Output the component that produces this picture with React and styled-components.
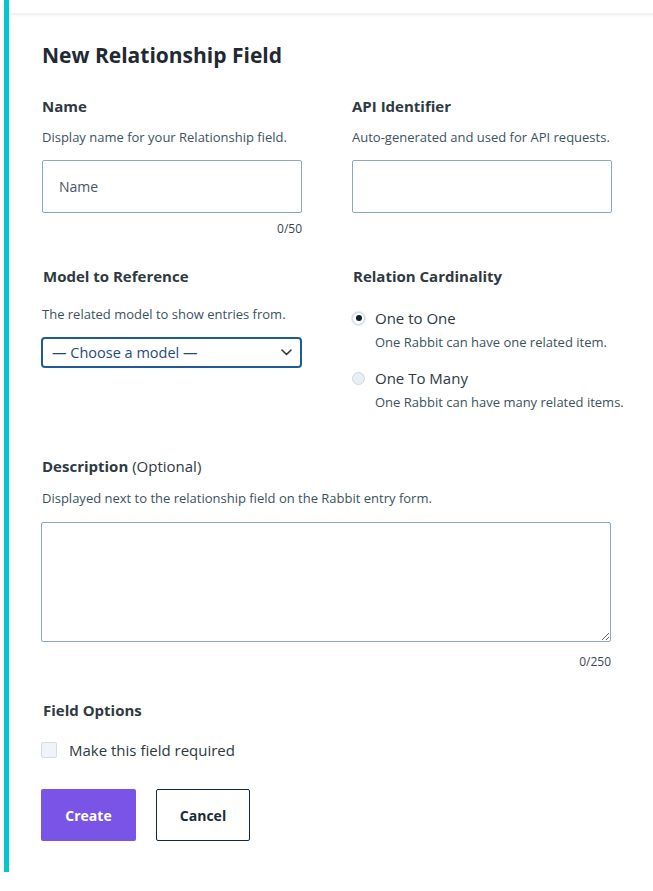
import styled, { createGlobalStyle } from "styled-components";

const GlobalStyle = createGlobalStyle`
  body {
    margin: 0;
    background: #ffffff;
    font-family: "Open Sans", "Noto Sans", sans-serif;
    overflow: hidden;
  }
`

const Card = styled.div`
  margin-left: 4px;
  width: 700px;
  height: 872px;
  border-left: 5px solid #00c6d2;
  background: #ffffff;
  box-shadow: 0 2px 4px rgba(0, 0, 0, 0.12);
  box-sizing: border-box;
  display: flex;
  flex-direction: column;
`

const TopStrip = styled.div`
  height: 13px;
  flex-shrink: 0;
  box-shadow: 0 2px 3px rgba(0, 0, 0, 0.07);
`

const Form = styled.form`
  padding: 28px 0 0 33px;
  display: flex;
  flex-direction: column;
  width: 571px;
`

const Title = styled.h1`
  margin: 0;
  font-size: 21px;
  line-height: 28px;
  font-weight: 700;
  color: #1f2a33;
`

const Row = styled.div`
  display: grid;
  grid-template-columns: 260px 260px;
  column-gap: 50px;
  margin-top: ${(p) => p.$top}px;
`

const Column = styled.div`
  display: flex;
  flex-direction: column;
`

const Label = styled.div`
  font-size: 15px;
  line-height: 20px;
  font-weight: 700;
  color: #2e3942;
  padding-left: ${(p) => p.$indent || 0}px;
  span {
    font-weight: 400;
  }
`

const Help = styled.div`
  font-size: 13px;
  line-height: 18px;
  color: #3b5261;
  margin-top: ${(p) => p.$top}px;
  white-space: nowrap;
`

const TextInput = styled.input`
  margin-top: 14px;
  height: 53px;
  box-sizing: border-box;
  border: 1px solid #8aa6c1;
  border-radius: 2px;
  padding: 0 16px;
  font-family: inherit;
  font-size: 14px;
  color: #2e3942;
  outline: none;
  &::placeholder {
    color: #4a5561;
  }
`

const Counter = styled.div`
  margin-top: ${(p) => p.$top}px;
  margin-right: ${(p) => p.$right || 0}px;
  text-align: right;
  font-size: 12px;
  line-height: 16px;
  color: #3a4650;
`

const SelectBox = styled.div`
  margin-top: 14px;
  margin-left: -1px;
  height: 31px;
  box-sizing: border-box;
  border: 2px solid #1e5b97;
  border-radius: 4px;
  display: flex;
  align-items: center;
  justify-content: space-between;
  padding: 0 8px 0 9px;
  font-size: 14.5px;
  color: #1d4c7b;
`

const RadioList = styled.div`
  display: flex;
  flex-direction: column;
  gap: 17px;
  margin-top: 22px;
`

const RadioOption = styled.div`
  display: grid;
  grid-template-columns: 23px 1fr;
  align-items: center;
  row-gap: 5px;
`

const RadioDot = styled.span`
  width: 13px;
  height: 13px;
  border-radius: 50%;
  box-sizing: border-box;
  border: 1px solid ${(p) => (p.$checked ? "#cfd9e3" : "#cdd7e0")};
  background: ${(p) => (p.$checked ? "#ffffff" : "#e9eff4")};
  box-shadow: ${(p) => (p.$checked ? "0 0 0 1px #e3ebf2" : "none")};
  display: flex;
  align-items: center;
  justify-content: center;
  &::after {
    content: "";
    width: 6px;
    height: 6px;
    border-radius: 50%;
    background: #0c2132;
    display: ${(p) => (p.$checked ? "block" : "none")};
  }
`

const RadioText = styled.div`
  font-size: 15px;
  line-height: 20px;
  color: #2e3942;
`

const RadioHelp = styled.div`
  grid-column: 2;
  font-size: 13px;
  line-height: 18px;
  color: #3b5261;
  white-space: nowrap;
`

const Section = styled.div`
  display: flex;
  flex-direction: column;
  margin-top: ${(p) => p.$top}px;
`

const TextArea = styled.textarea`
  margin-top: 15px;
  margin-left: -1px;
  width: 570px;
  height: 120px;
  box-sizing: border-box;
  border: 1px solid #8aa6c1;
  border-radius: 2px;
  font-family: inherit;
  outline: none;
  resize: vertical;
`

const CheckRow = styled.label`
  display: flex;
  align-items: center;
  gap: 12px;
  margin-top: 20px;
  margin-left: -1px;
  font-size: 15px;
  line-height: 20px;
  color: #2e3942;
`

const CheckBox = styled.span`
  width: 16px;
  height: 16px;
  box-sizing: border-box;
  border: 1px solid #d4dce4;
  border-radius: 2px;
  background: #f0f4f8;
`

const Buttons = styled.div`
  display: flex;
  gap: 20px;
  margin-top: 29px;
  margin-left: -1px;
`

const Button = styled.button`
  height: 52px;
  width: ${(p) => p.$width}px;
  box-sizing: border-box;
  border-radius: 2px;
  font-family: inherit;
  font-size: 14px;
  font-weight: 700;
  cursor: pointer;
  border: ${(p) => (p.$primary ? "none" : "1.5px solid #0f2a3a")};
  background: ${(p) => (p.$primary ? "#7a53e7" : "#ffffff")};
  color: ${(p) => (p.$primary ? "#ffffff" : "#1a2c38")};
`

const Chevron = () => (
  <svg width="11" height="7" viewBox="0 0 11 7" fill="none">
    <path d="M1 1l4.5 4.5L10 1" stroke="#2f3a44" strokeWidth="1.6" strokeLinecap="round" strokeLinejoin="round"/>
  </svg>
)

const App = () => {
  return (
    <>
      <GlobalStyle/>
      <Card>
        <TopStrip/>
        <Form onSubmit={(e) => e.preventDefault()}>
          <Title>New Relationship Field</Title>

          <Row $top={27}>
            <Column>
              <Label>Name</Label>
              <Help $top={12}>Display name for your Relationship field.</Help>
              <TextInput placeholder="Name"/>
              <Counter $top={8}>0/50</Counter>
            </Column>
            <Column>
              <Label>API Identifier</Label>
              <Help $top={12}>Auto-generated and used for API requests.</Help>
              <TextInput/>
            </Column>
          </Row>

          <Row $top={29}>
            <Column>
              <Label $indent={1}>Model to Reference</Label>
              <Help $top={19}>The related model to show entries from.</Help>
              <SelectBox>
                <span>— Choose a model —</span>
                <Chevron/>
              </SelectBox>
            </Column>
            <Column>
              <Label $indent={1}>Relation Cardinality</Label>
              <RadioList>
                <RadioOption>
                  <RadioDot $checked/>
                  <RadioText>One to One</RadioText>
                  <RadioHelp>One Rabbit can have one related item.</RadioHelp>
                </RadioOption>
                <RadioOption>
                  <RadioDot/>
                  <RadioText>One To Many</RadioText>
                  <RadioHelp>One Rabbit can have many related items.</RadioHelp>
                </RadioOption>
              </RadioList>
            </Column>
          </Row>

          <Section $top={45}>
            <Label>Description <span>(Optional)</span></Label>
            <Help $top={13}>Displayed next to the relationship field on the Rabbit entry form.</Help>
            <TextArea/>
            <Counter $top={12} $right={2}>0/250</Counter>
          </Section>

          <Section $top={30}>
            <Label $indent={1}>Field Options</Label>
            <CheckRow>
              <CheckBox/>
              Make this field required
            </CheckRow>
          </Section>

          <Buttons>
            <Button $primary $width={95}>Create</Button>
            <Button $width={94}>Cancel</Button>
          </Buttons>
        </Form>
      </Card>
    </>
  );
};

export default App;
